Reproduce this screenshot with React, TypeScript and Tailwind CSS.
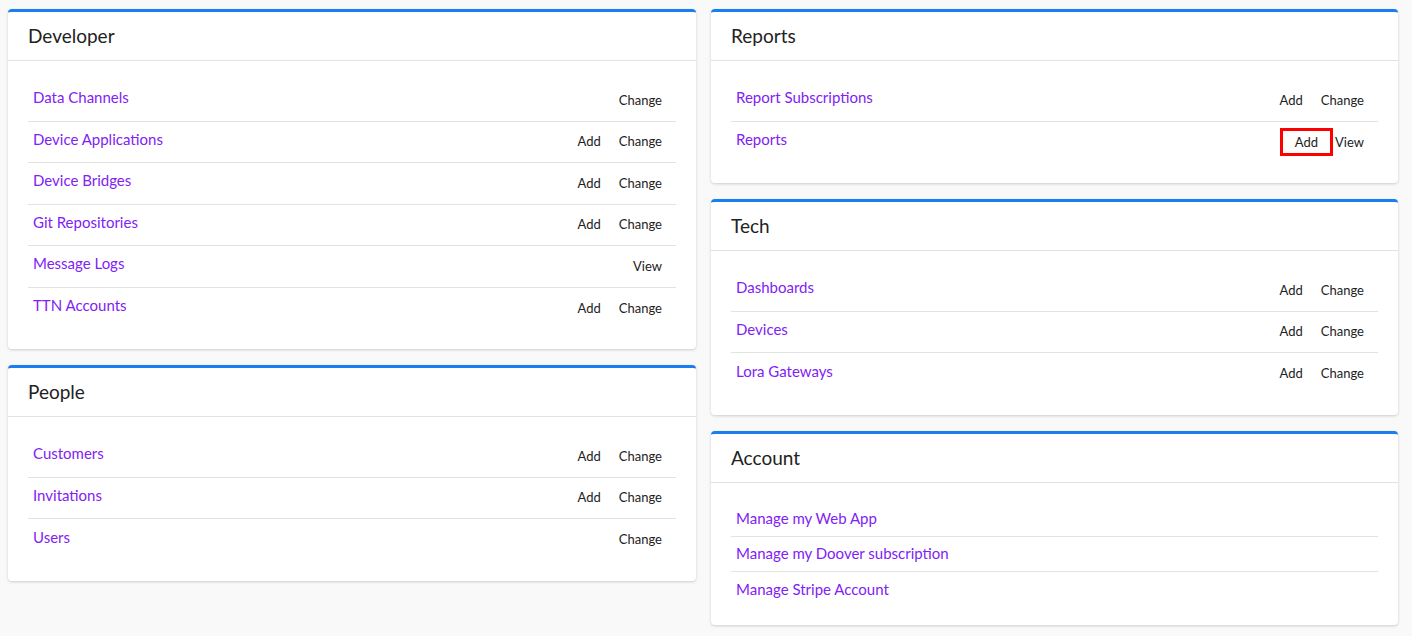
type Row = { label: string; actions: string[]; highlight?: string };

type Section = { title: string; rows: Row[]; compact?: boolean };

const LEFT: Section[] = [
  {
    title: 'Developer',
    rows: [
      { label: 'Data Channels', actions: ['Change'] },
      { label: 'Device Applications', actions: ['Add', 'Change'] },
      { label: 'Device Bridges', actions: ['Add', 'Change'] },
      { label: 'Git Repositories', actions: ['Add', 'Change'] },
      { label: 'Message Logs', actions: ['View'] },
      { label: 'TTN Accounts', actions: ['Add', 'Change'] },
    ],
  },
  {
    title: 'People',
    rows: [
      { label: 'Customers', actions: ['Add', 'Change'] },
      { label: 'Invitations', actions: ['Add', 'Change'] },
      { label: 'Users', actions: ['Change'] },
    ],
  },
];

const RIGHT: Section[] = [
  {
    title: 'Reports',
    rows: [
      { label: 'Report Subscriptions', actions: ['Add', 'Change'] },
      // the red box is the screenshot's annotation on this Add
      { label: 'Reports', actions: ['Add', 'View'], highlight: 'Add' },
    ],
  },
  {
    title: 'Tech',
    rows: [
      { label: 'Dashboards', actions: ['Add', 'Change'] },
      { label: 'Devices', actions: ['Add', 'Change'] },
      { label: 'Lora Gateways', actions: ['Add', 'Change'] },
    ],
  },
  {
    title: 'Account',
    compact: true,
    rows: [
      { label: 'Manage my Web App', actions: [] },
      { label: 'Manage my Doover subscription', actions: [] },
      { label: 'Manage Stripe Account', actions: [] },
    ],
  },
];

function Actions({ row }: { row: Row }) {
  if (row.highlight) {
    return (
      <div className="mr-[14px] flex items-center text-[13px] text-[#222]">
        <span className="border-[3px] border-[#ff0000] px-[12px] pt-[4px] pb-[3px] leading-[15px]">
          Add
        </span>
        <span className="ml-[2px]">View</span>
      </div>
    );
  }
  return (
    <div className="mr-[14px] flex items-center gap-[18px] text-[13px] text-[#222]">
      {row.actions.map((a) => (
        <span key={a}>{a}</span>
      ))}
    </div>
  );
}

function Card({ section }: { section: Section }) {
  return (
    <div className="overflow-hidden rounded-[4px] border-t-[3px] border-[#1a7ef0] bg-white shadow-[0_1px_3px_rgba(0,0,0,0.18)]">
      <div className="flex h-[49px] items-center border-b border-[#e2e2e2] px-[20px] pt-[1px] text-[19px] text-[#222]">
        {section.title}
      </div>
      <div className={`px-[20px] pt-[19px] ${section.compact ? 'pb-[18px]' : 'pb-[20px]'}`}>
        {section.rows.map((row, i) => (
          <div
            key={row.label}
            className={`flex items-center justify-between ${
              section.compact ? 'h-[35px]' : 'h-[41.5px]'
            } ${i < section.rows.length - 1 ? 'border-b border-[#e2e2e2]' : ''}`}
          >
            <span
              className={`pl-[5px] text-[15px] text-[#7f22f5] ${
                section.compact ? '' : 'pb-[6px]'
              }`}
            >
              {row.label}
            </span>
            {row.actions.length > 0 && <Actions row={row} />}
          </div>
        ))}
      </div>
    </div>
  );
}

export default function App() {
  return (
    <div
      className="grid min-h-[636px] grid-cols-[688px_687px] items-start gap-x-[15px] bg-[#f9f9f9] pt-[9px] pl-[8px]"
      style={{ fontFamily: '"Source Sans Pro", Lato, "Noto Sans", sans-serif' }}
    >
      <div className="flex flex-col gap-[16px]">
        {LEFT.map((s) => (
          <Card key={s.title} section={s} />
        ))}
      </div>
      <div className="flex flex-col gap-[16px]">
        {RIGHT.map((s) => (
          <Card key={s.title} section={s} />
        ))}
      </div>
    </div>
  );
}
